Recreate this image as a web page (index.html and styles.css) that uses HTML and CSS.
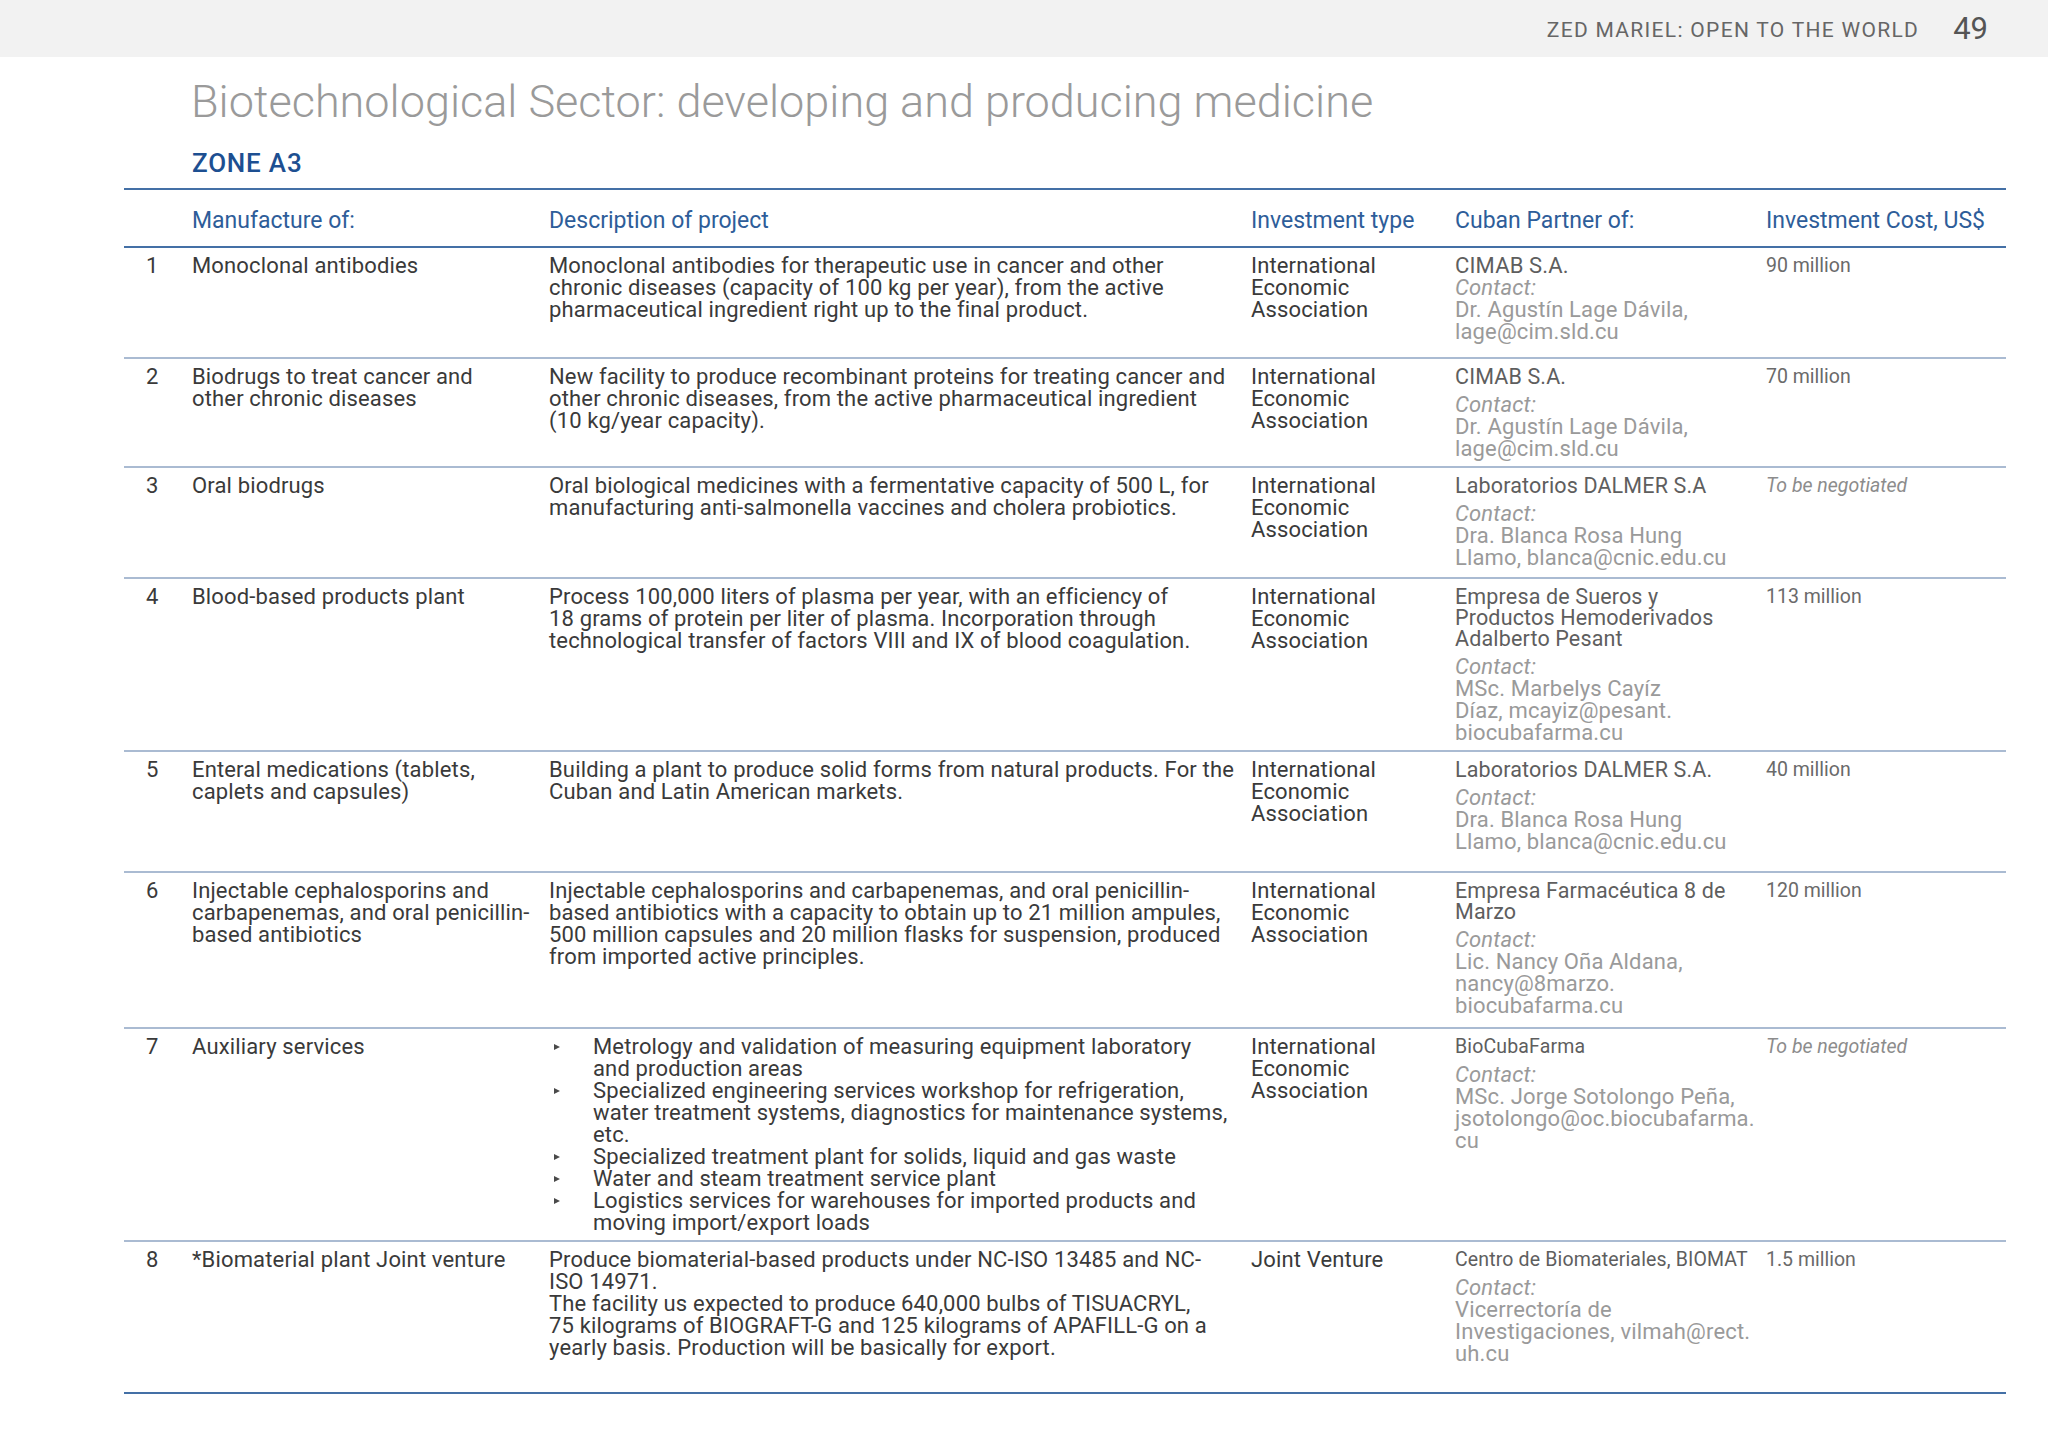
FILE: index.html
```html
<!DOCTYPE html>
<html lang="en">
<head>
<meta charset="utf-8">
<title>ZED Mariel: Open to the World – 49</title>
<link rel="stylesheet" href="styles.css">
</head>
<body>
<header class="topbar">
  <span class="running">ZED MARIEL: OPEN TO THE WORLD</span>
  <span class="pageno">49</span>
</header>
<main class="page">
  <h1 class="title">Biotechnological Sector: developing and producing medicine</h1>
  <h2 class="zone">ZONE A3</h2>
  <table class="projects">
    <colgroup>
      <col class="c-num"><col class="c-man"><col class="c-desc"><col class="c-type"><col class="c-partner"><col class="c-cost">
    </colgroup>
    <thead>
      <tr>
        <th></th>
        <th>Manufacture of:</th>
        <th>Description of project</th>
        <th>Investment type</th>
        <th>Cuban Partner of:</th>
        <th>Investment Cost, US$</th>
      </tr>
    </thead>
    <tbody>
      <tr class="r1">
        <td class="num">1</td>
        <td>Monoclonal antibodies</td>
        <td>Monoclonal antibodies for therapeutic use in cancer and other<br>chronic diseases (capacity of 100 kg per year), from the active<br>pharmaceutical ingredient right up to the final product.</td>
        <td>International<br>Economic<br>Association</td>
        <td><div class="pname tight">CIMAB S.A.</div><div class="contact tight"><em>Contact:</em><br>Dr. Agustín Lage Dávila,<br>lage@cim.sld.cu</div></td>
        <td class="cost">90 million</td>
      </tr>
      <tr class="r2">
        <td class="num">2</td>
        <td>Biodrugs to treat cancer and<br>other chronic diseases</td>
        <td>New facility to produce recombinant proteins for treating cancer and<br>other chronic diseases, from the active pharmaceutical ingredient<br>(10 kg/year capacity).</td>
        <td>International<br>Economic<br>Association</td>
        <td><div class="pname">CIMAB S.A.</div><div class="contact"><em>Contact:</em><br>Dr. Agustín Lage Dávila,<br>lage@cim.sld.cu</div></td>
        <td class="cost">70 million</td>
      </tr>
      <tr class="r3">
        <td class="num">3</td>
        <td>Oral biodrugs</td>
        <td>Oral biological medicines with a fermentative capacity of 500 L, for<br>manufacturing anti-salmonella vaccines and cholera probiotics.</td>
        <td>International<br>Economic<br>Association</td>
        <td><div class="pname">Laboratorios DALMER S.A</div><div class="contact"><em>Contact:</em><br>Dra. Blanca Rosa Hung<br>Llamo, blanca@cnic.edu.cu</div></td>
        <td class="cost neg">To be negotiated</td>
      </tr>
      <tr class="r4">
        <td class="num">4</td>
        <td>Blood-based products plant</td>
        <td>Process 100,000 liters of plasma per year, with an efficiency of<br>18 grams of protein per liter of plasma. Incorporation through<br>technological transfer of factors VIII and IX of blood coagulation.</td>
        <td>International<br>Economic<br>Association</td>
        <td><div class="pname">Empresa de Sueros y<br>Productos Hemoderivados<br>Adalberto Pesant</div><div class="contact"><em>Contact:</em><br>MSc. Marbelys Cayíz<br>Díaz, mcayiz@pesant.<br>biocubafarma.cu</div></td>
        <td class="cost">113 million</td>
      </tr>
      <tr class="r5">
        <td class="num">5</td>
        <td>Enteral medications (tablets,<br>caplets and capsules)</td>
        <td>Building a plant to produce solid forms from natural products. For the<br>Cuban and Latin American markets.</td>
        <td>International<br>Economic<br>Association</td>
        <td><div class="pname">Laboratorios DALMER S.A.</div><div class="contact"><em>Contact:</em><br>Dra. Blanca Rosa Hung<br>Llamo, blanca@cnic.edu.cu</div></td>
        <td class="cost">40 million</td>
      </tr>
      <tr class="r6">
        <td class="num">6</td>
        <td>Injectable cephalosporins and<br>carbapenemas, and oral penicillin-<br>based antibiotics</td>
        <td>Injectable cephalosporins and carbapenemas, and oral penicillin-<br>based antibiotics with a capacity to obtain up to 21 million ampules,<br>500 million capsules and 20 million flasks for suspension, produced<br>from imported active principles.</td>
        <td>International<br>Economic<br>Association</td>
        <td><div class="pname">Empresa Farmacéutica 8 de<br>Marzo</div><div class="contact"><em>Contact:</em><br>Lic. Nancy Oña Aldana,<br>nancy@8marzo.<br>biocubafarma.cu</div></td>
        <td class="cost">120 million</td>
      </tr>
      <tr class="r7">
        <td class="num">7</td>
        <td>Auxiliary services</td>
        <td>
          <ul class="bullets">
            <li>Metrology and validation of measuring equipment laboratory<br>and production areas</li>
            <li>Specialized engineering services workshop for refrigeration,<br>water treatment systems, diagnostics for maintenance systems,<br>etc.</li>
            <li>Specialized treatment plant for solids, liquid and gas waste</li>
            <li>Water and steam treatment service plant</li>
            <li>Logistics services for warehouses for imported products and<br>moving import/export loads</li>
          </ul>
        </td>
        <td>International<br>Economic<br>Association</td>
        <td><div class="pname small">BioCubaFarma</div><div class="contact"><em>Contact:</em><br>MSc. Jorge Sotolongo Peña,<br>jsotolongo@oc.biocubafarma.<br>cu</div></td>
        <td class="cost neg">To be negotiated</td>
      </tr>
      <tr class="r8">
        <td class="num">8</td>
        <td>*Biomaterial plant Joint venture</td>
        <td>Produce biomaterial-based products under NC-ISO 13485 and NC-<br>ISO 14971.<br>The facility us expected to produce 640,000 bulbs of TISUACRYL,<br>75 kilograms of BIOGRAFT-G and 125 kilograms of APAFILL-G on a<br>yearly basis. Production will be basically for export.</td>
        <td>Joint Venture</td>
        <td><div class="pname small">Centro de Biomateriales, BIOMAT</div><div class="contact"><em>Contact:</em><br>Vicerrectoría de<br>Investigaciones, vilmah@rect.<br>uh.cu</div></td>
        <td class="cost">1.5 million</td>
      </tr>
    </tbody>
  </table>
</main>
</body>
</html>
```
FILE: styles.css
```css
* { box-sizing: border-box; }
html, body { margin: 0; padding: 0; background: #ffffff; }
body {
  font-family: Roboto, "Liberation Sans", sans-serif;
  color: #3a3a3a;
  width: 2048px;
}
.topbar {
  height: 57px;
  background: #f2f2f2;
  display: flex;
  align-items: center;
  justify-content: flex-end;
  padding-right: 60px;
  gap: 34px;
}
.running {
  font-size: 21px;
  letter-spacing: 1.3px;
  color: #666666;
  font-weight: 400;
  padding-top: 2px;
}
.pageno {
  font-size: 31px;
  color: #555555;
  font-weight: 400;
}
.page {
  padding-left: 124px;
}
.title {
  margin: 17px 0 0 67px;
  font-size: 45px;
  font-weight: 300;
  color: #9a9a9a;
  line-height: 56px;
}
.zone {
  margin: 17px 0 0 68px;
  font-size: 26px;
  font-weight: 500;
  letter-spacing: 0.8px;
  color: #1d4f91;
  line-height: 32px;
}
.projects {
  margin-top: 9px;
  width: 1882px;
  border-collapse: collapse;
  table-layout: fixed;
  border-top: 2px solid #4470a6;
  border-bottom: 2px solid #4470a6;
}
.c-num { width: 68px; }
.c-man { width: 357px; }
.c-desc { width: 702px; }
.c-type { width: 204px; }
.c-partner { width: 311px; }
.c-cost { width: 240px; }
.projects th {
  text-align: left;
  font-weight: 400;
  font-size: 23px;
  color: #2e5d99;
  height: 58px;
  padding: 4px 0 0 0;
  vertical-align: middle;
  white-space: nowrap;
  border-bottom: 2px solid #4470a6;
}
.projects td {
  vertical-align: top;
  padding: 7px 0 0 0;
  font-size: 22px;
  letter-spacing: 0.15px;
  line-height: 22px;
  white-space: nowrap;
  border-bottom: 2px solid #aabbd2;
}
.projects tbody tr:last-child td { border-bottom: none; }
.projects td.num { padding-left: 22px; }
.r1 { height: 111px; }
.r2 { height: 109px; }
.r3 { height: 111px; }
.r4 { height: 173px; }
.r5 { height: 121px; }
.r6 { height: 156px; }
.r7 { height: 213px; }
.r8 { height: 152px; }
.pname {
  color: #5e5e5e;
  font-size: 21.5px;
  line-height: 21px;
}
.pname.tight { font-size: 22px; line-height: 22px; }
.pname.small { font-size: 19.5px; }
.contact {
  color: #9a9a9a;
  margin-top: 7px;
}
.contact.tight { margin-top: 0; }
.contact em { font-style: italic; }
.projects td.cost {
  font-size: 19.5px;
  letter-spacing: 0;
  color: #6a6a6a;
}
.projects td.cost.neg { font-style: italic; color: #8c8c8c; }
.bullets {
  list-style: none;
  margin: 0;
  padding: 0;
}
.bullets li {
  position: relative;
  padding-left: 44px;
}
.bullets li::before {
  content: "";
  position: absolute;
  left: 5px;
  top: 8px;
  border-left: 6px solid #4a4a4a;
  border-top: 3.5px solid transparent;
  border-bottom: 3.5px solid transparent;
}
```
